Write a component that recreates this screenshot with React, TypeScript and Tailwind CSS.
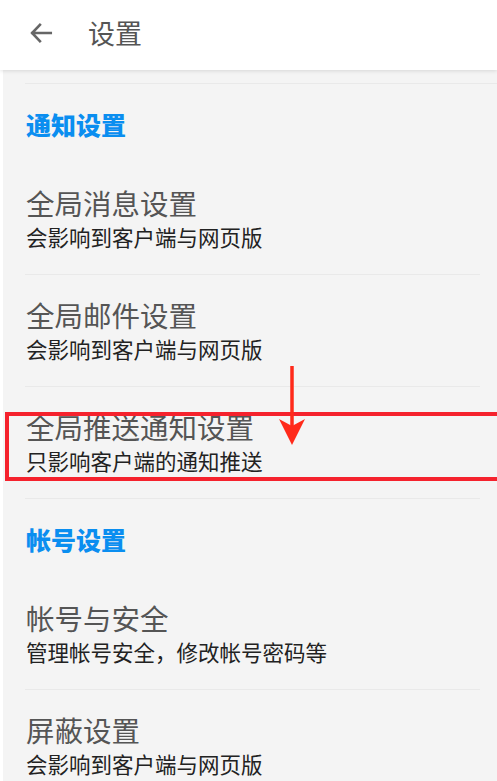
const font = { fontFamily: '"Noto Sans CJK SC", "Noto Sans", sans-serif' };

type Item = { title: string; desc: string };

const sections: { name: string; items: Item[] }[] = [
  {
    name: "通知设置",
    items: [
      { title: "全局消息设置", desc: "会影响到客户端与网页版" },
      { title: "全局邮件设置", desc: "会影响到客户端与网页版" },
      { title: "全局推送通知设置", desc: "只影响客户端的通知推送" },
    ],
  },
  {
    name: "帐号设置",
    items: [
      { title: "帐号与安全", desc: "管理帐号安全，修改帐号密码等" },
      { title: "屏蔽设置", desc: "会影响到客户端与网页版" },
    ],
  },
];

function Row({ item }: { item: Item }) {
  return (
    <div className="h-[112px] flex flex-col pt-[22px] border-b border-[#e9e9e9]">
      <div className="ml-[1px] text-[28.5px] leading-[36px] text-[#555]">{item.title}</div>
      <div className="ml-[1px] text-[21.5px] leading-[28px] text-[#222] mt-[2px]">{item.desc}</div>
    </div>
  );
}

export default function App() {
  return (
    <div className="relative w-[497px] h-[781px] overflow-hidden bg-[#f4f4f4]" style={font}>
      <div className="h-[70px] bg-white flex items-center pb-[5px] shadow-[0_1px_4px_rgba(0,0,0,0.12)] relative z-10">
        <svg width="26" height="26" viewBox="0 0 24 24" className="ml-[28px]" fill="none" stroke="#666" strokeWidth="2.4" strokeLinecap="square">
          <path d="M21 12H4M11 4.5L3.8 12l7.2 7.5" />
        </svg>
        <div className="ml-[34px] text-[27px] text-[#555] leading-none">设置</div>
      </div>
      <div className="pt-[13px] border-l-[3px] border-white">
        <div className="ml-[22px] border-t border-[#e9e9e9]" />
        {sections.map((s) => (
          <div key={s.name}>
            <div className="h-[79px] flex items-center pl-[23px] pt-[3px] text-[25px] font-black text-[#0a8ef0]">
              {s.name}
            </div>
            <div className="ml-[22px] mr-[17px]">
              {s.items.map((it) => (
                <Row key={it.title} item={it} />
              ))}
            </div>
          </div>
        ))}
      </div>
      {/* annotation */}
      <div className="absolute left-[5px] top-[412px] w-[496px] h-[69px] border-[4px] border-[#f5222d]" />
      <svg className="absolute left-[276px] top-[366px]" width="32" height="82" viewBox="0 0 32 82">
        <line x1="16" y1="0" x2="16" y2="66" stroke="#ff2a1a" strokeWidth="3.5" />
        <path d="M3 53 L16 79 L29 53 L16 60 Z" fill="#ff2a1a" />
      </svg>
    </div>
  );
}
